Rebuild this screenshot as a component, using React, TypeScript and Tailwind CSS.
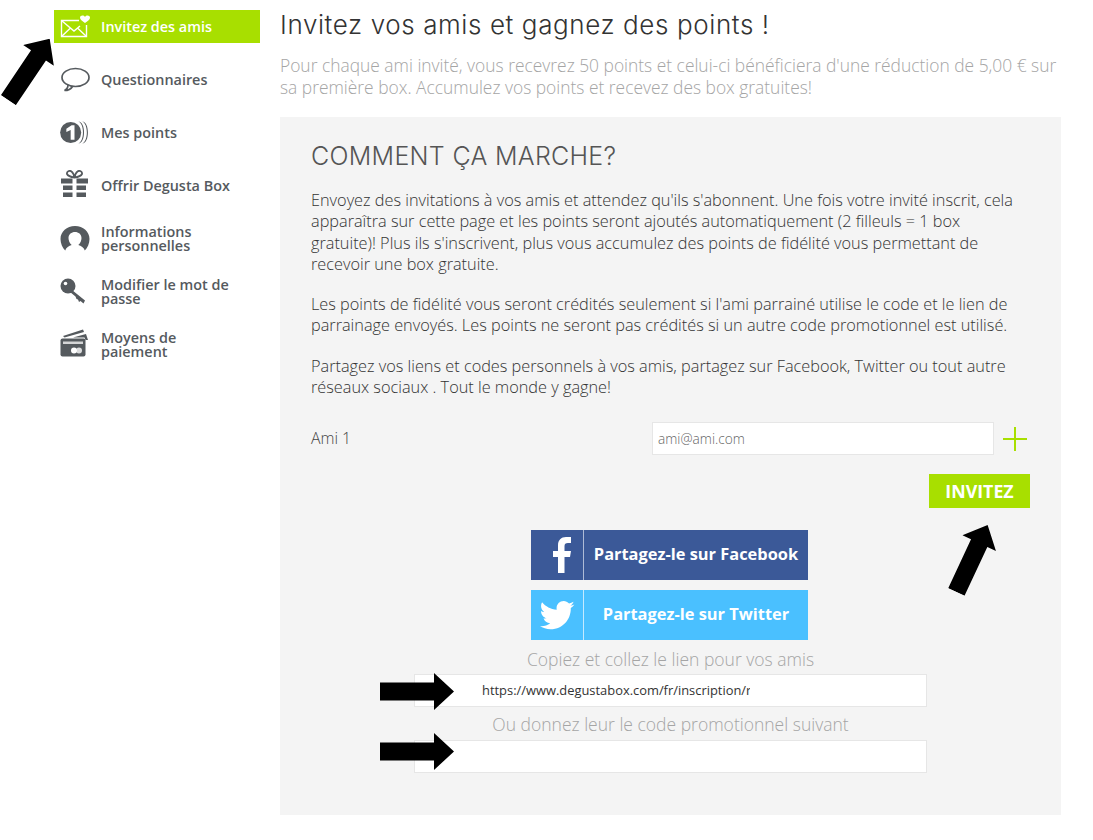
import React from "react";

const G = "#555a5e";

function MailIcon() {
  return (
    <svg width="30" height="26" viewBox="0 0 30 26" fill="none" stroke="#fff" strokeWidth="1.4">
      <path d="M19 7.500H1.500v16h25V12" />
      <path d="M1.500 7.500 14 18l6-5M1.500 23.500l9-8.500M26.500 23.500l-9-8.500" />
      <path d="M25 10c-3-2-5-3.500-5-5.500C20 2.500 23.500 1.500 25 4c1.500-2.500 5-1.500 5 .5 0 2-2 3.500-5 5.500Z" fill="#fff" stroke="none" />
    </svg>
  );
}
function ChatIcon() {
  return (
    <svg width="30" height="26" viewBox="0 0 30 26" fill="none" stroke={G} strokeWidth="1.700">
      <ellipse cx="15.500" cy="10.500" rx="13.500" ry="9" />
      <path d="M8 18c0 2.500-1.500 4.500-3.500 5.500 3.500 0 6.500-1.500 8-4" />
    </svg>
  );
}
function CoinIcon() {
  return (
    <svg width="29" height="23" viewBox="0 0 30 24">
      <circle cx="11" cy="12" r="11" fill={G} />
      <path d="M6.500 8 12 4.500h3V19.500h-4V9.500L6.500 11.500Z" fill="#fff" />
      <path d="M19 .5C25.500 3 25.500 21 19 23.500 27 23.500 27 .5 19 .5Z" fill={G} />
      <path d="M23 .5C29.500 3 29.500 21 23 23.500 31 23.500 31 .5 23 .5Z" fill={G} />
    </svg>
  );
}
function GiftIcon() {
  return (
    <svg className="-mt-[3px]" width="29" height="28" viewBox="0 0 29 28" fill={G}>
      <path d="M1 8.500h11.500v5H1zM16.500 8.500H28v5H16.500zM3 15.500h9.500V20H3zM16.500 15.500H26V20h-9.500zM3 22.500h9.500V27H3zM16.500 22.500H26V27h-9.500z" />
      <path d="M14.500 7.500C11 7 8 6 7 4 6.500 1.500 9.500 0 11.500 1.500 13 2.500 14 5 14.500 7.500ZM14.500 7.500C18 7 21 6 22 4 22.500 1.500 19.500 0 17.500 1.500 16 2.500 15 5 14.500 7.500Z" fill="none" stroke={G} strokeWidth="1.800" />
    </svg>
  );
}
function UserIcon() {
  return (
    <svg width="30" height="26" viewBox="0 0 30 26">
      <path d="M15 0C6.700 0 .5 5.800.5 13c0 4.600 2 8.800 4.700 11.500C6 21.500 9 19.800 11.700 19 9.500 17.300 8.500 14.300 8.500 12 8.500 8.200 11.500 6 15 6s6.500 2.200 6.500 6c0 2.300-1 5.300-3.200 7 2.700.8 5.700 2.500 6.500 5.500 2.700-2.700 4.700-6.900 4.700-11.500C29.500 5.800 23.300 0 15 0Z" fill={G} />
    </svg>
  );
}
function KeyIcon() {
  return (
    <svg className="-mt-[2px]" width="27" height="26" viewBox="0 0 27 26">
      <circle cx="8" cy="8" r="7.500" fill={G} />
      <circle cx="5.500" cy="5.500" r="1.800" fill="#fff" />
      <path d="M12 12 25 22.500 23.500 25.500 20.500 23 19 24 18 21.500 16.500 21 15.500 18.500 10 14Z" fill={G} />
    </svg>
  );
}
function CardIcon() {
  return (
    <svg className="-mt-[3px]" width="29" height="28" viewBox="0 0 29 28" fill={G}>
      <path d="M3 7 23 .5l1 2.500L4.500 8.500Z" />
      <path d="M13 8.500 26 5l2 6h-2.500l-1-2.500Z" />
      <rect x=".5" y="9.500" width="25" height="18" rx="2" />
      <rect x="3" y="12.500" width="20" height="2.500" fill="#fff" opacity=".75" />
      <circle cx="14" cy="21.500" r="3" fill="#fff" />
      <circle cx="19" cy="21.500" r="3" fill="#fff" opacity=".8" />
    </svg>
  );
}

function Arrow({ className, rotate, head = 20 }: { className: string; rotate: number; head?: number }) {
  const b = 74 - head;
  return (
    <svg className={className} width="74" height="37" viewBox="0 0 74 37" style={{ transform: `rotate(${rotate}deg)` }}>
      <path d={`M0 9.500H${b}V0L74 18.500 ${b} 37V27.500H0Z`} fill="#000" />
    </svg>
  );
}

const nav = [
  { icon: <ChatIcon />, label: "Questionnaires" },
  { icon: <CoinIcon />, label: "Mes points" },
  { icon: <GiftIcon />, label: "Offrir Degusta Box" },
  { icon: <UserIcon />, label: "Informations personnelles" },
  { icon: <KeyIcon />, label: "Modifier le mot de passe" },
  { icon: <CardIcon />, label: "Moyens de paiement" },
];

export default function App() {
  return (
    <div className="relative flex w-[1093px] h-[840px] overflow-hidden bg-white font-['Open_Sans',sans-serif]">
      <aside className="ml-[54px] mt-[10px] flex w-[206px] flex-col gap-[20px]">
        <div className="flex h-[33px] items-center bg-[#a8df00] pl-[6px] text-[14.4px] font-semibold text-white">
          <span className="-mt-[2px] flex w-[41px] shrink-0"><MailIcon /></span>
          <span>Invitez des amis</span>
        </div>
        {nav.map((n) => (
          <div key={n.label} className="flex h-[33px] items-center pl-[6px] text-[14.4px] font-semibold leading-[13.5px] text-[#555a5e]">
            <span className="flex w-[41px] shrink-0">{n.icon}</span>
            <span className="w-[140px]">{n.label}</span>
          </div>
        ))}
      </aside>

      <main className="ml-[20px] flex w-[781px] flex-col">
        <h1 className="mt-[8px] h-[34px] font-['Inter',sans-serif] text-[26px] font-light leading-[34px] tracking-[0.6px] text-[#333]">
          Invitez vos amis et gagnez des points !
        </h1>
        <p className="mt-[12px] h-[44px] w-[781px] text-[17.4px] font-light leading-[22px] text-[#a5a5a5]">
          Pour chaque ami invité, vous recevrez 50 points et celui-ci bénéficiera d'une réduction de 5,00 € sur sa première box. Accumulez vos points et recevez des box gratuites!
        </p>
        <section className="mt-[19px] flex h-[698px] flex-col bg-[#f4f4f4] px-[31px]">
          <h2 className="mt-[22px] font-['Inter',sans-serif] text-[25px] font-light leading-[34px] tracking-[0.3px] text-[#555]">COMMENT ÇA MARCHE?</h2>
          <div className="mt-[17px] flex w-[715px] flex-col gap-[19px] text-[16.3px] font-light leading-[21.3px] text-[#333]">
            <p>Envoyez des invitations à vos amis et attendez qu'ils s'abonnent. Une fois votre invité inscrit, cela apparaîtra sur cette page et les points seront ajoutés automatiquement (2 filleuls = 1 box gratuite)! Plus ils s'inscrivent, plus vous accumulez des points de fidélité vous permettant de recevoir une box gratuite.</p>
            <p>Les points de fidélité vous seront crédités seulement si l'ami parrainé utilise le code et le lien de parrainage envoyés. Les points ne seront pas crédités si un autre code promotionnel est utilisé.</p>
            <p>Partagez vos liens et codes personnels à vos amis, partagez sur Facebook, Twitter ou tout autre réseaux sociaux . Tout le monde y gagne!</p>
          </div>
          <div className="mt-[24px] flex h-[33px] items-center">
            <span className="w-[341px] text-[15.800px] font-light text-[#444]">Ami 1</span>
            <div className="flex h-[33px] w-[342px] items-center border border-[#e6e6e6] bg-white pl-[5px] text-[13.7px] font-light text-[#666]">ami@ami.com</div>
            <svg className="ml-[9px]" width="24" height="24" viewBox="0 0 24 24" stroke="#a8df00" strokeWidth="2"><path d="M0 12H24M12 0V24" /></svg>
          </div>
          <div className="mt-[19px] flex justify-end">
            <div className="flex h-[34px] w-[101px] items-center justify-center bg-[#a8df00] text-[17.800px] font-bold text-white">INVITEZ</div>
          </div>
          <div className="ml-[220px] mt-[22px] flex flex-col gap-[10px]">
            <div className="flex h-[50px] w-[277px] items-center bg-[#3b5998] text-white">
              <span className="flex h-full w-[53px] items-center justify-center border-r border-[#aebbd6] pl-[10px]">
                <svg width="18" height="36" viewBox="0 0 18 36" fill="#fff"><path d="M5 36V20H0v-6h5V8.500C5 3 8.200 0 13 0h5v6h-3c-2.500 0-3.500 1-3.500 3.200V14H18l-1 6h-5.500v16Z" /></svg>
              </span>
              <span className="flex-1 pb-[2px] text-center text-[16.4px] font-bold">Partagez-le sur Facebook</span>
            </div>
            <div className="flex h-[50px] w-[277px] items-center bg-[#4ac0ff] text-white">
              <span className="flex h-full w-[53px] items-center justify-center border-r border-[#c4eaff]">
                <svg width="36" height="29" viewBox="0 0 24 20" fill="#fff"><path d="M24 2.400c-.9.400-1.800.7-2.800.8 1-.6 1.800-1.600 2.200-2.700-1 .6-2 1-3.100 1.200C19.300.7 18 0 16.600 0c-2.700 0-4.900 2.200-4.900 4.900 0 .4 0 .8.100 1.100C7.700 5.800 4.100 3.800 1.700.9 1.200 1.600 1 2.500 1 3.400c0 1.700.9 3.200 2.200 4.100-.8 0-1.600-.2-2.200-.6v.1c0 2.400 1.700 4.400 3.900 4.800-.4.100-.8.200-1.300.2-.3 0-.6 0-.9-.1.600 2 2.400 3.400 4.600 3.400-1.700 1.300-3.800 2.100-6.100 2.100-.4 0-.8 0-1.200-.1 2.200 1.400 4.800 2.200 7.500 2.200 9.100 0 14-7.500 14-14v-.6c1-.7 1.800-1.600 2.500-2.500Z" /></svg>
              </span>
              <span className="flex-1 pb-[2px] text-center text-[16.4px] font-bold">Partagez-le sur Twitter</span>
            </div>
          </div>
          <p className="mt-[8px] ml-[-31px] w-[781px] text-center text-[17.500px] font-light leading-[22px] text-[#a5a5a5]">Copiez et collez le lien pour vos amis</p>
          <div className="ml-[103px] mt-[4px] flex h-[33px] w-[513px] items-center border border-[#e6e6e6] bg-white pl-[67px]">
            <span className="w-[268px] overflow-hidden whitespace-nowrap text-[12.900px] font-normal text-[#333]">https://www.degustabox.com/fr/inscription/r</span>
          </div>
          <p className="mt-[6px] ml-[-31px] w-[781px] text-center text-[17.500px] font-light leading-[22px] text-[#a5a5a5]">Ou donnez leur le code promotionnel suivant</p>
          <div className="ml-[103px] mt-[5px] h-[33px] w-[513px] border border-[#e6e6e6] bg-white" />
        </section>
      </main>

      <Arrow className="absolute left-[380px] top-[673px]" rotate={0} />
      <Arrow className="absolute left-[380px] top-[733px]" rotate={0} />
      <Arrow className="absolute left-[-8px] top-[51px]" rotate={-56} />
      <Arrow className="absolute left-[935px] top-[540px]" rotate={-65} />
    </div>
  );
}
